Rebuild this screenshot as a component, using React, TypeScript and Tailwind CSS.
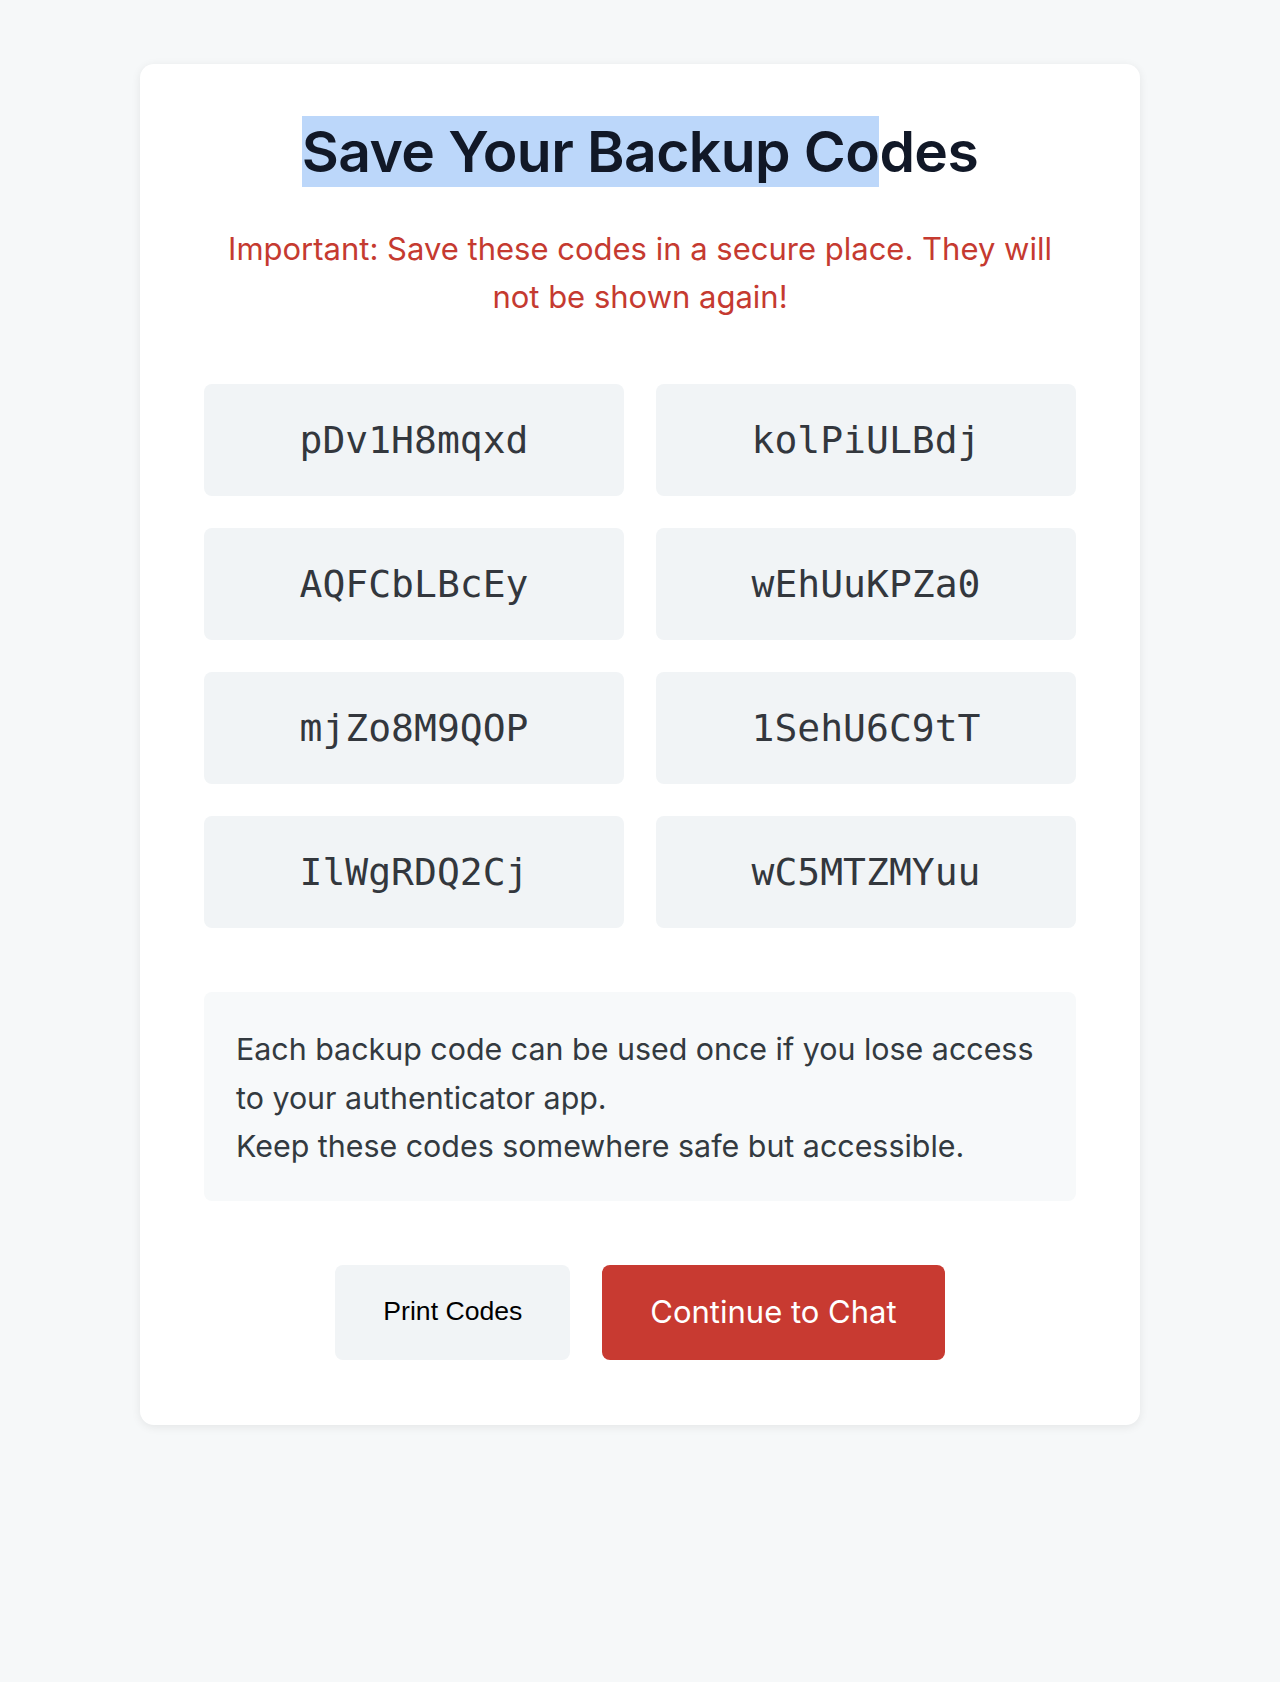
import React from 'react';

const codes = [
  'pDv1H8mqxd',
  'kolPiULBdj',
  'AQFCbLBcEy',
  'wEhUuKPZa0',
  'mjZo8M9QOP',
  '1SehU6C9tT',
  'IlWgRDQ2Cj',
  'wC5MTZMYuu',
];

export default function App() {
  return (
    <div className="min-h-[1682px] bg-[#f6f8f9] pt-16 font-['Inter','Noto_Sans',sans-serif]">
      {/* Card */}
      <div className="mx-auto w-[1000px] rounded-[14px] bg-white px-16 pt-[52px] pb-[65px] shadow-[0_2px_10px_rgba(0,0,0,0.08)]">
        <h1 className="text-center text-[57px] leading-[71px] font-semibold tracking-[-0.01em] text-[#111827]">
          <span className="bg-[#bcd7fa] py-[1px]">Save Your Backup Co</span>des
        </h1>
        <p className="mt-[38px] px-4 text-center text-[31px] leading-[48px] text-[#c53a30]">
          Important: Save these codes in a secure place. They will not be shown again!
        </p>

        {/* Codes */}
        <div className="mt-[63px] grid grid-cols-2 gap-x-8 gap-y-8">
          {codes.map((code) => (
            <div
              key={code}
              className="flex h-[112px] items-center justify-center rounded-[8px] bg-[#f1f4f6] font-['DejaVu_Sans_Mono',monospace] text-[38px] text-[#33373d]"
            >
              {code}
            </div>
          ))}
        </div>

        {/* Info */}
        <div className="mt-16 rounded-[8px] bg-[#f7f9fa] px-8 pt-[33px] pb-[30px] text-[30.4px] leading-[48.5px] text-[#333a40]">
          <p>Each backup code can be used once if you lose access to your authenticator app.</p>
          <p>Keep these codes somewhere safe but accessible.</p>
        </div>

        {/* Actions */}
        <div className="mt-16 flex justify-center gap-8">
          <button className="h-[95px] rounded-[8px] bg-[#f1f4f6] px-12 font-['Liberation_Sans',Arial,sans-serif] text-[26.6px] text-black">
            Print Codes
          </button>
          <button className="h-[95px] rounded-[8px] bg-[#c83a31] px-12 text-[31px] text-white">
            Continue to Chat
          </button>
        </div>
      </div>
    </div>
  );
}
